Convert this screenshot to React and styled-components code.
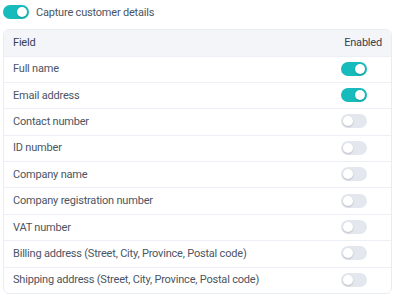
import React from "react";
import styled, { createGlobalStyle } from "styled-components";

const Global = createGlobalStyle`
  html, body { margin: 0; padding: 0; background: #ffffff; }
  body { font-family: Roboto, "Liberation Sans", sans-serif; }
`;

const Page = styled.div`
  padding: 5px 8px 0 3px;
  display: flex;
  flex-direction: column;
  gap: 10px;
`;

const TopRow = styled.label`
  display: flex;
  align-items: center;
  gap: 7px;
  height: 14px;
  font-size: 11px;
  letter-spacing: -0.2px;
  color: #4b5563;
`;

const Track = styled.span`
  position: relative;
  display: inline-block;
  flex: none;
  width: 26px;
  height: 14px;
  border-radius: 7px;
  background: ${(p) => (p.$on ? "#17bbbb" : "#e3e7ee")};
`;

const Knob = styled.span`
  position: absolute;
  top: 2px;
  left: ${(p) => (p.$on ? "14px" : "2px")};
  width: 10px;
  height: 10px;
  border-radius: 50%;
  background: #ffffff;
  box-shadow: 0 1px 2px rgba(0, 0, 0, 0.18);
`;

const Table = styled.div`
  border: 1px solid #e8ecf3;
  border-radius: 6px;
  overflow: hidden;
`;

const Row = styled.div`
  display: flex;
  align-items: center;
  justify-content: space-between;
  box-sizing: border-box;
  height: 26.4px;
  padding: 0 24px 1px 9px;
  font-size: 11px;
  letter-spacing: -0.2px;
  color: #4b5563;
  border-top: 1px solid #eceff5;
  &:first-child { border-top: none; }
`;

const HeaderRow = styled(Row)`
  background: #f3f5f9;
  color: #374151;
  padding-right: 9px;
  height: 25.5px;
`;

const Toggle = ({ on }) => (
  <Track $on={on}>
    <Knob $on={on} />
  </Track>
);

const fields = [
  ["Full name", true],
  ["Email address", true],
  ["Contact number", false],
  ["ID number", false],
  ["Company name", false],
  ["Company registration number", false],
  ["VAT number", false],
  ["Billing address (Street, City, Province, Postal code)", false],
  ["Shipping address (Street, City, Province, Postal code)", false],
];

export default function App() {
  return (
    <Page>
      <Global />
      <TopRow>
        <Toggle on />
        <span>Capture customer details</span>
      </TopRow>
      <Table>
        <HeaderRow>
          <span>Field</span>
          <span>Enabled</span>
        </HeaderRow>
        {fields.map(([name, on]) => (
          <Row key={name}>
            <span>{name}</span>
            <Toggle on={on} />
          </Row>
        ))}
      </Table>
    </Page>
  );
}
